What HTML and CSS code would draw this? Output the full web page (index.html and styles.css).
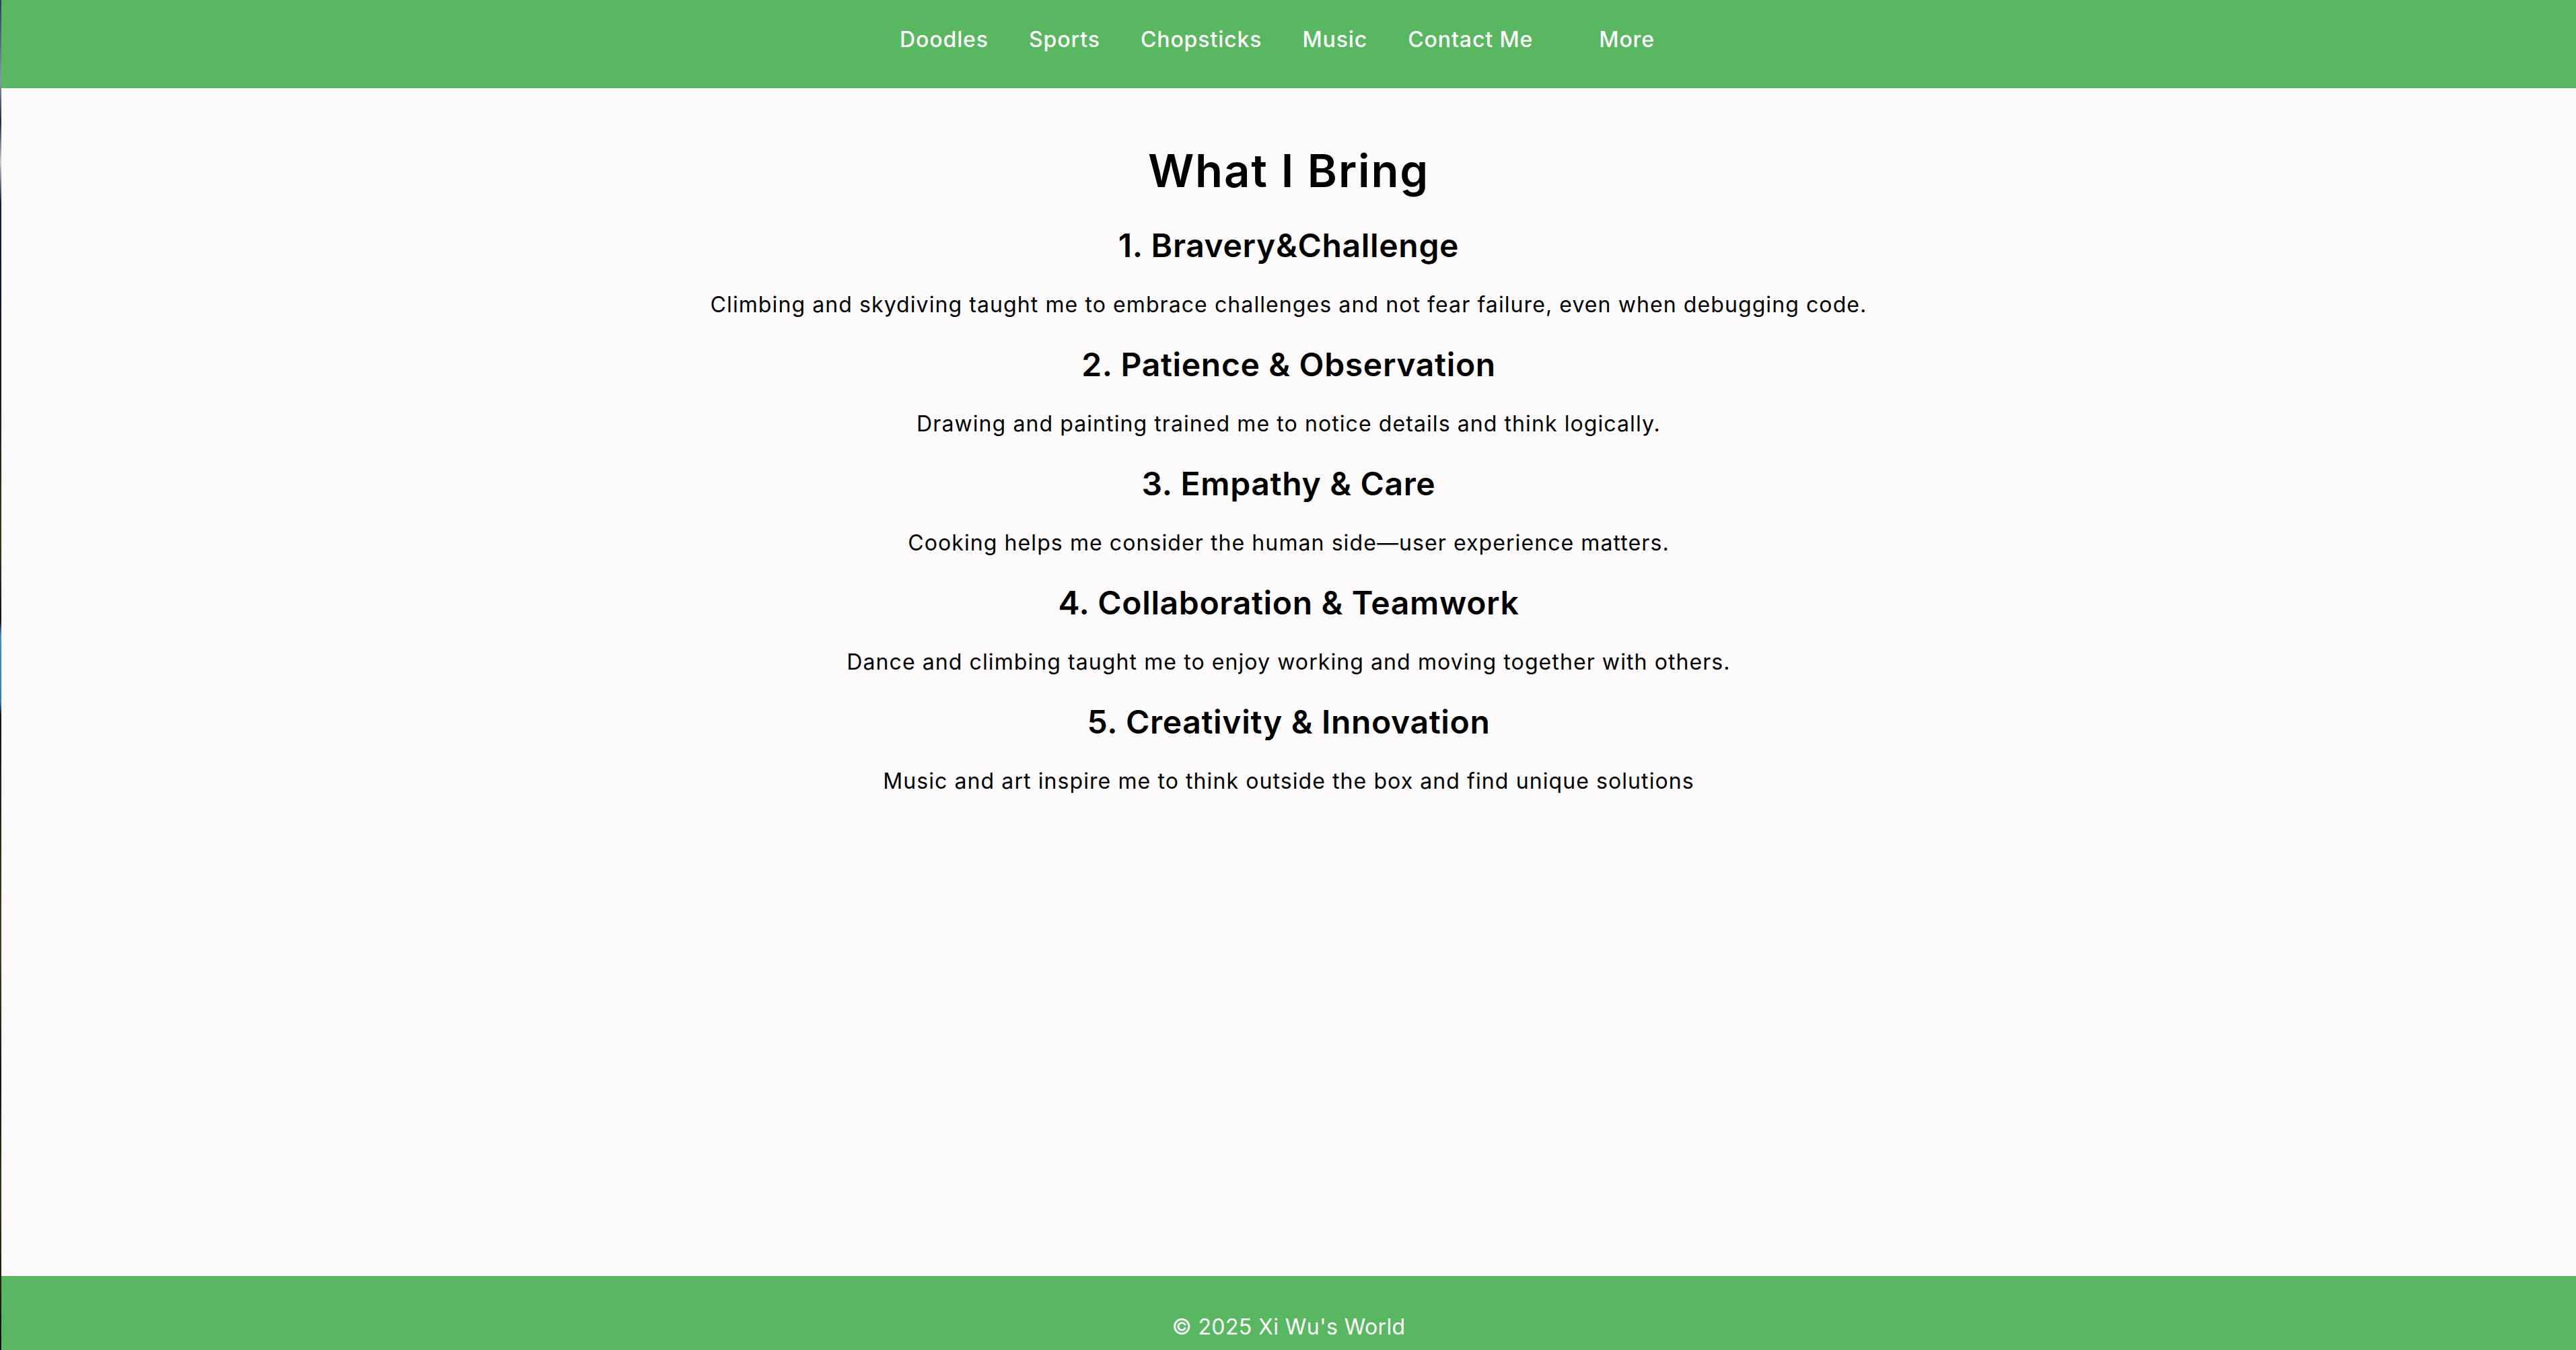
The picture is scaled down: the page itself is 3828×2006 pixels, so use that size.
FILE: index.html
```html
<!DOCTYPE html>
<html lang="en">
<head>
<meta charset="utf-8">
<title>What I Bring - Xi Wu's World</title>
<link rel="stylesheet" href="styles.css">
</head>
<body>
<nav class="topnav">
  <ul class="nav-list">
    <li class="nav-item"><a href="#">Doodles</a></li>
    <li class="nav-item"><a href="#">Sports</a></li>
    <li class="nav-item"><a href="#">Chopsticks</a></li>
    <li class="nav-item"><a href="#">Music</a></li>
    <li class="nav-item"><a href="#">Contact Me</a></li>
    <li class="nav-item nav-more"><a href="#">More</a></li>
  </ul>
</nav>
<main class="content">
  <h1 class="title">What I Bring</h1>
  <section class="trait">
    <h2 class="trait-title">1. Bravery&amp;Challenge</h2>
    <p class="trait-text">Climbing and skydiving taught me to embrace challenges and not fear failure, even when debugging code.</p>
  </section>
  <section class="trait">
    <h2 class="trait-title">2. Patience &amp; Observation</h2>
    <p class="trait-text">Drawing and painting trained me to notice details and think logically.</p>
  </section>
  <section class="trait">
    <h2 class="trait-title">3. Empathy &amp; Care</h2>
    <p class="trait-text">Cooking helps me consider the human side—user experience matters.</p>
  </section>
  <section class="trait">
    <h2 class="trait-title">4. Collaboration &amp; Teamwork</h2>
    <p class="trait-text">Dance and climbing taught me to enjoy working and moving together with others.</p>
  </section>
  <section class="trait">
    <h2 class="trait-title">5. Creativity &amp; Innovation</h2>
    <p class="trait-text">Music and art inspire me to think outside the box and find unique solutions</p>
  </section>
</main>
<footer class="footer">
  <p class="footer-text">© 2025 Xi Wu's World</p>
</footer>
</body>
</html>
```
FILE: styles.css
```css
html {
  background: linear-gradient(to bottom,
    #2b3c58 0%, #8a96a8 6%, #1d2d48 9%, #c8ccd4 12%, #14243c 15%,
    #0d1a2e 22%, #1c1e14 30%, #3a3a1a 40%, #0f1418 46%,
    #3d8fd4 47%, #2f7fc0 52%, #10151a 53%, #2c2a14 62%,
    #45421c 70%, #14140e 80%, #3a3616 88%, #0e0e0a 100%);
  min-height: 100%;
}

body {
  margin: 0 0 0 2px;
  min-height: 100vh;
  display: flex;
  flex-direction: column;
  background: #fcfafb;
  font-family: Inter, "Noto Sans", "DejaVu Sans", sans-serif;
  color: #000;
}

.topnav {
  background: #59b761;
  height: 131px;
  box-sizing: border-box;
  padding-top: 40px;
}

.nav-list {
  list-style: none;
  margin: 0;
  padding: 0;
  display: flex;
  justify-content: center;
  gap: 60px;
}

.nav-item a {
  color: #fff;
  text-decoration: none;
  font-size: 32px;
  font-weight: 500;
  letter-spacing: 0.028em;
  line-height: 38.4px;
  display: block;
}

.nav-more a {
  padding: 0 34px 0 38px;
}

.content {
  flex: 1;
  padding: 38px 40px 0;
  text-align: center;
}

.title {
  font-size: 67px;
  font-weight: 600;
  letter-spacing: 0.028em;
  line-height: 1.2;
  margin: 45px 0 42px;
}

.trait-title {
  font-size: 48px;
  font-weight: 600;
  letter-spacing: 0.014em;
  line-height: 1.2;
  margin: 41px 0 40px;
}

.trait-text {
  font-size: 32px;
  font-weight: 400;
  letter-spacing: 0.034em;
  line-height: 1.2;
  margin: 32px 0;
}

.footer {
  background: #59b761;
  color: #fff;
  text-align: center;
  padding: 57px 0 15px;
}

.footer-text {
  margin: 0;
  font-size: 32px;
  font-weight: 400;
  letter-spacing: 0.012em;
  line-height: 38.4px;
}
```
